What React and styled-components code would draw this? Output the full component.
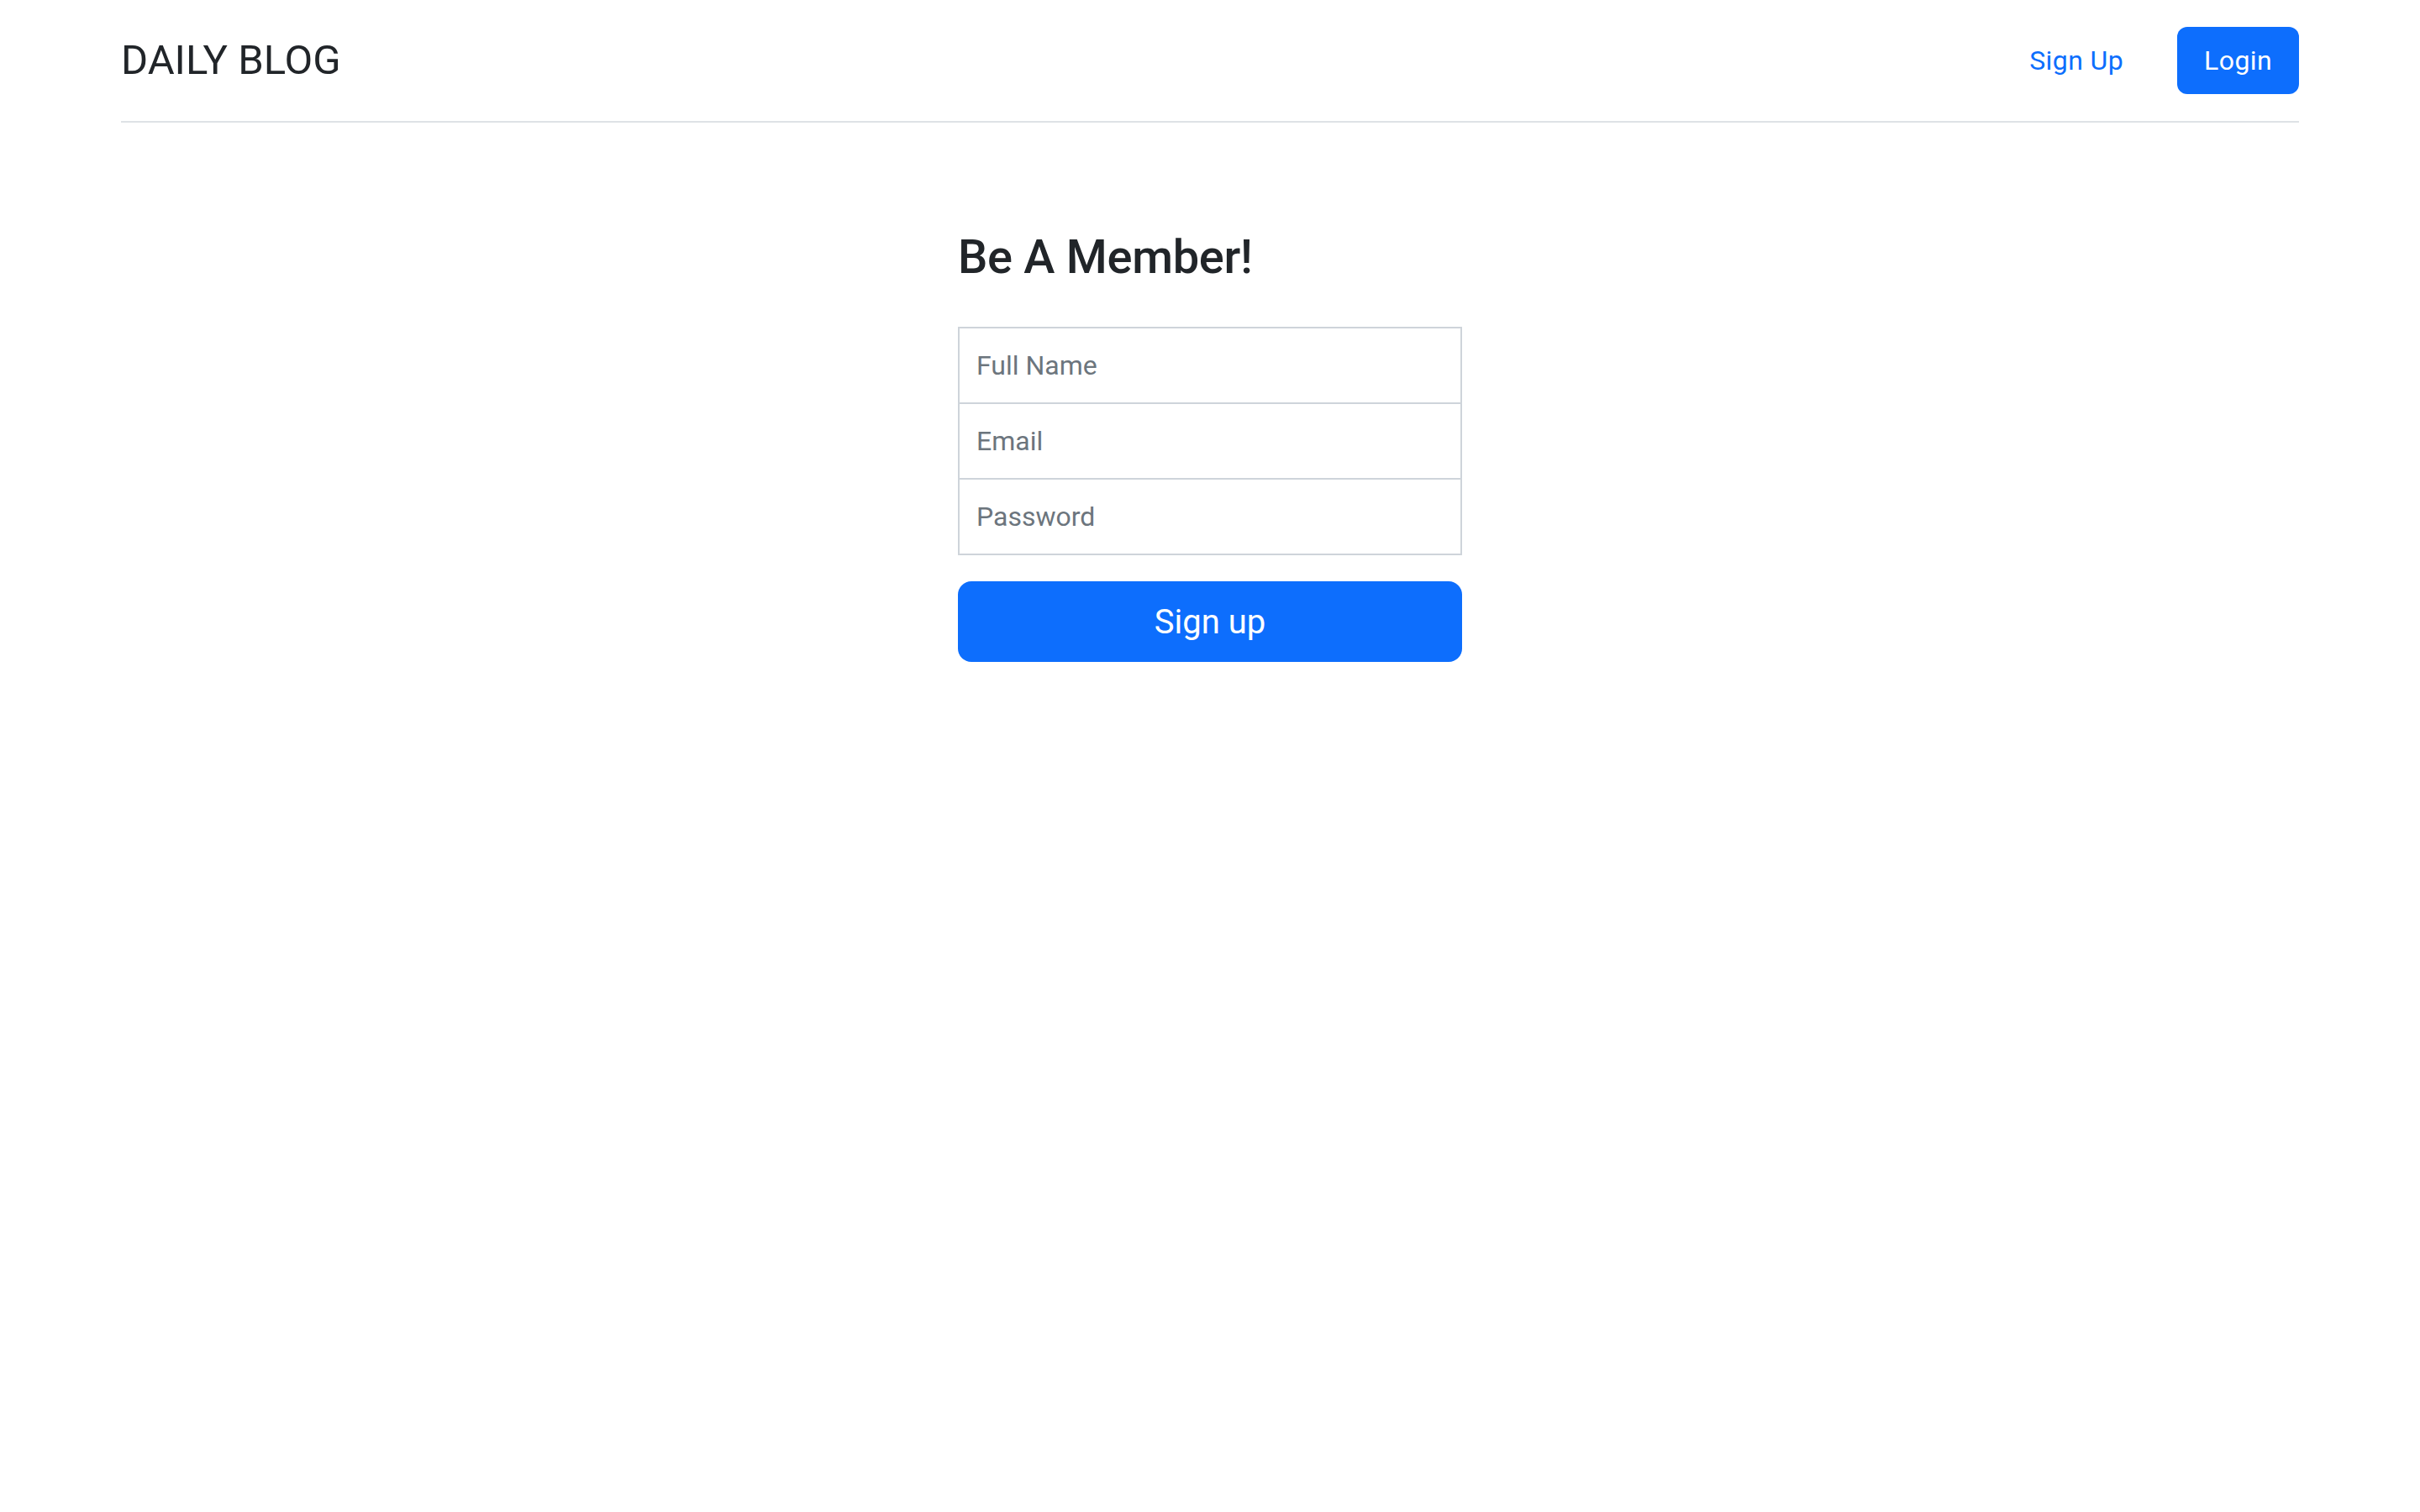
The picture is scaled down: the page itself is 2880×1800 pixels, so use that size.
import React from 'react';
import styled, { createGlobalStyle } from 'styled-components';

const GlobalStyle = createGlobalStyle`
  html, body {
    margin: 0;
    padding: 0;
    background: #ffffff;
  }
  body {
    font-family: Roboto, "Liberation Sans", Arial, sans-serif;
    color: #212529;
    -webkit-font-smoothing: antialiased;
  }
  * {
    box-sizing: border-box;
  }
`;

const Page = styled.div`
  min-height: 1800px;
  background: #ffffff;
`;

const Container = styled.div`
  padding: 0 144px;
`;

const Header = styled.header`
  display: flex;
  align-items: center;
  justify-content: space-between;
  padding: 32px 0;
  border-bottom: 2px solid #dee2e6;
`;

const Brand = styled.a`
  font-family: Roboto, "Liberation Sans", sans-serif;
  font-size: 49px;
  line-height: 80px;
  color: #212529;
  text-decoration: none;
`;

const Nav = styled.nav`
  display: flex;
  align-items: center;
  gap: 32px;
`;

const NavLink = styled.a`
  display: block;
  padding: 24px 32px;
  font-size: 32px;
  line-height: 32px;
  letter-spacing: 0.4px;
  border-radius: 12px;
  text-decoration: none;
  color: ${(p) => (p.$active ? '#ffffff' : '#0d6efd')};
  background: ${(p) => (p.$active ? '#0d6efd' : 'transparent')};
`;

const Main = styled.main`
  display: flex;
  justify-content: center;
  padding-top: 127px;
`;

const SignupForm = styled.form`
  width: 600px;
  display: flex;
  flex-direction: column;
`;

const Title = styled.h1`
  margin: 0 0 49px;
  font-size: 56px;
  line-height: 1.2;
  font-weight: 500;
  letter-spacing: -0.3px;
  color: #212529;
`;

const Fields = styled.div`
  display: flex;
  flex-direction: column;
  margin-bottom: 31px;
`;

const Input = styled.input`
  display: block;
  width: 100%;
  height: 92px;
  padding: 0 20px;
  border: 2px solid #ced4da;
  border-radius: 0;
  background: #ffffff;
  font-family: Roboto, "Liberation Sans", sans-serif;
  font-size: 32px;
  color: #212529;
  outline: none;

  & + & {
    margin-top: -2px;
  }

  &::placeholder {
    color: #6c757d;
    opacity: 1;
  }
`;

const SubmitButton = styled.button`
  width: 100%;
  height: 96px;
  border: none;
  border-radius: 16px;
  background: #0d6efd;
  color: #ffffff;
  font-family: Roboto, "Liberation Sans", sans-serif;
  font-size: 40px;
  cursor: pointer;
`;

export default function App() {
  return (
    <Page>
      <GlobalStyle />
      <Container>
        <Header>
          <Brand href="#">DAILY BLOG</Brand>
          <Nav>
            <NavLink href="#">Sign Up</NavLink>
            <NavLink href="#" $active>Login</NavLink>
          </Nav>
        </Header>
      </Container>
      <Main>
        <SignupForm onSubmit={(e) => e.preventDefault()}>
          <Title>Be A Member!</Title>
          <Fields>
            <Input type="text" placeholder="Full Name" />
            <Input type="email" placeholder="Email" />
            <Input type="password" placeholder="Password" />
          </Fields>
          <SubmitButton type="submit">Sign up</SubmitButton>
        </SignupForm>
      </Main>
    </Page>
  );
}
